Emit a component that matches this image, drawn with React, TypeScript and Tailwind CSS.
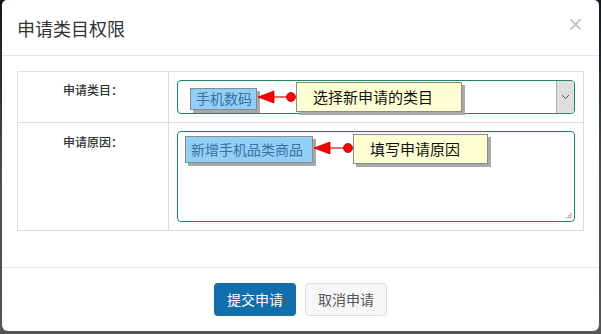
import { ReactNode } from 'react'

const font = { fontFamily: '"Microsoft YaHei", "Noto Sans CJK SC", "Noto Sans", sans-serif' }

function Arrow({ width }: { width: number }) {
  // red pointer line: triangle head on the left, dot on the right
  return (
    <svg width={width} height="14" viewBox={`0 0 ${width} 14`} className="block">
      <line x1="14" y1="7" x2={width - 4} y2="7" stroke="#e00" strokeWidth="1.2" />
      <polygon points={`1,7 17,1 17,13`} fill="#f00" stroke="#b00" strokeWidth="0.8" />
      <circle cx={width - 5} cy="7" r="4.5" fill="#f00" stroke="#b00" strokeWidth="0.8" />
    </svg>
  )
}

function Note({ tone, children, className }: { tone: 'blue' | 'yellow'; children: ReactNode; className?: string }) {
  const look =
    tone === 'blue'
      ? 'bg-[#91cff9] text-[#3b6f9c] text-[14px] px-[5px]'
      : 'bg-[#ffffd4] text-[#111] text-[15px] px-[16px]'
  return (
    <div className={`border border-[#8a8a8a] shadow-[3px_3px_0_#a9a9a9] flex items-center whitespace-nowrap ${look} ${className ?? ''}`}>
      {children}
    </div>
  )
}

export default function App() {
  return (
    <div className="w-screen h-screen bg-gradient-to-b from-[#0d1a1c] via-[#4b4b4b] to-[#555] px-[2px] pb-[3px] overflow-hidden" style={font}>
      <div className="h-full bg-white rounded-b-[6px] rounded-t-[5px] flex flex-col">
        <div className="h-[56px] border-b border-[#e5e5e5] flex items-center justify-between pl-[15px] pr-[15px] pt-[2px]">
          <h4 className="text-[18px] text-[#333]">申请类目权限</h4>
          <span className="text-[#c2c2c2] text-[17px] font-bold leading-none -mt-[10px]">×</span>
        </div>

        <div className="flex-1 px-[15px] pt-[15px]">
          <table className="w-full border-collapse border border-[#ddd] text-[12px]">
            <tbody>
              <tr className="h-[51px]">
                <td className="w-[151px] border border-[#ddd] text-center align-top pt-[9px] font-medium text-[#333]">申请类目：</td>
                <td className="border border-[#ddd] px-[8px] align-top pt-[8px]">
                  <div className="relative h-[34px] border border-[#1a8a5a] rounded-[4px] flex justify-end">
                    <div className="w-[18px] h-full bg-[#dedede] border-l border-[#aaa] rounded-r-[3px] flex items-center justify-center">
                      <svg width="9" height="6" viewBox="0 0 9 6"><path d="M1 1 L4.5 4.5 L8 1" fill="none" stroke="#555" strokeWidth="1" /></svg>
                    </div>
                    <div className="absolute left-[12px] top-[4px] flex items-center">
                      <Note tone="blue" className="h-[22px] w-[67px]">手机数码</Note>
                      <div className="mt-[-3px]"><Arrow width={39} /></div>
                      <Note tone="yellow" className="h-[30px] -mt-[3px] w-[166px]">选择新申请的类目</Note>
                    </div>
                  </div>
                </td>
              </tr>
              <tr className="h-[108px]">
                <td className="border border-[#ddd] text-center align-top pt-[10px] font-medium text-[#333]">申请原因：</td>
                <td className="border border-[#ddd] px-[8px] align-top pt-[8px]">
                  <div className="relative h-[91px] border border-[#1a8a5a] rounded-[4px]">
                    <div className="absolute left-[7px] top-[3px] flex items-center">
                      <Note tone="blue" className="h-[27px] w-[128px]">新增手机品类商品</Note>
                      <div className="mt-[-3px]"><Arrow width={40} /></div>
                      <Note tone="yellow" className="h-[30px] -mt-[1px] w-[135px]">填写申请原因</Note>
                    </div>
                    <svg width="7" height="7" viewBox="0 0 7 7" className="absolute right-[2px] bottom-[2px]">
                      <rect x="5" y="1" width="1.5" height="1.5" fill="#aaa" />
                      <rect x="3" y="3" width="1.5" height="1.5" fill="#aaa" />
                      <rect x="5" y="3" width="1.5" height="1.5" fill="#aaa" />
                      <rect x="1" y="5" width="1.5" height="1.5" fill="#aaa" />
                      <rect x="3" y="5" width="1.5" height="1.5" fill="#aaa" />
                      <rect x="5" y="5" width="1.5" height="1.5" fill="#aaa" />
                    </svg>
                  </div>
                </td>
              </tr>
            </tbody>
          </table>
        </div>

        <div className="h-[64px] border-t border-[#e5e5e5] flex items-center justify-center gap-[9px] pb-[1px]">
          <button className="w-[82px] h-[33px] rounded-[4px] bg-[#0f6eab] text-white text-[14px]">提交申请</button>
          <button className="w-[82px] h-[33px] rounded-[4px] bg-[#f7f7f7] border border-[#ddd] text-[#555] text-[14px]">取消申请</button>
        </div>
      </div>
    </div>
  )
}
